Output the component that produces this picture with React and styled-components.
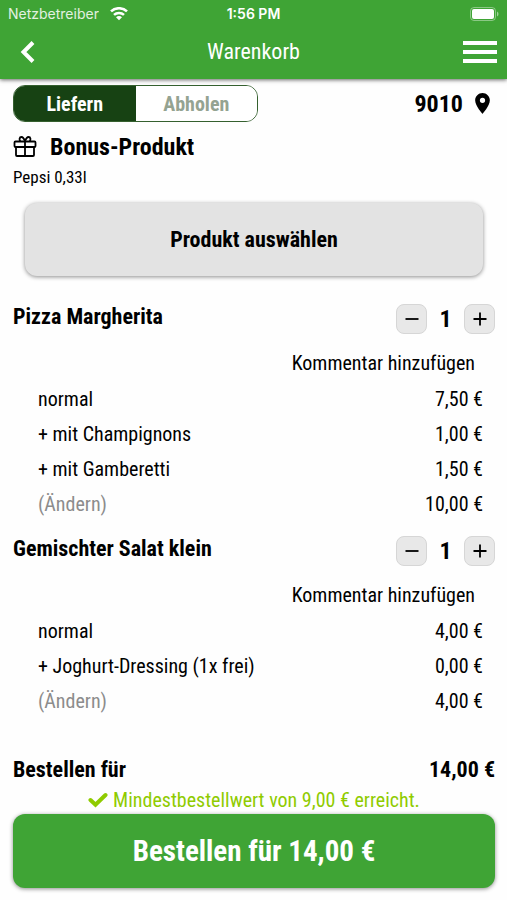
import React, { useState } from "react";
import styled, { createGlobalStyle } from "styled-components";

const GlobalStyle = createGlobalStyle`
  *, *::before, *::after { box-sizing: border-box; }
  body {
    margin: 0;
    background: #fefefe;
    color: #000;
    font-family: "Roboto Condensed", "Roboto", "Liberation Sans", sans-serif;
    font-size: 20px;
    line-height: 24px;
  }
  button {
    font: inherit;
    color: inherit;
    background: none;
    border: 0;
    padding: 0;
    cursor: pointer;
  }
`;

const Header = styled.header`
  background: #3fa435;
  color: #fff;
  box-shadow: 0 1px 4px rgba(0, 0, 0, 0.6);
  padding-bottom: 3px;
`;

const StatusBar = styled.div`
  display: grid;
  grid-template-columns: 1fr auto 1fr;
  align-items: center;
  height: 27px;
  padding: 0 8px;
  font-family: "Inter", sans-serif;
  font-size: 14px;
  line-height: 20px;
`;

const Carrier = styled.span`
  display: flex;
  align-items: center;
  gap: 11px;
`;

const CarrierName = styled.span`
  opacity: 0.85;
`;

const Clock = styled.span`
  font-weight: 600;
`;

const Battery = styled.span`
  display: flex;
  justify-content: flex-end;
`;

const NavBar = styled.nav`
  display: grid;
  grid-template-columns: 1fr auto 1fr;
  align-items: center;
  height: 49px;
  padding: 0 10px;
`;

const NavButton = styled.button`
  display: flex;
  justify-content: ${(p) => p.$align};
  justify-self: ${(p) => p.$align};
  min-width: 34px;
`;

const BackButton = styled(NavButton)`
  padding-left: 10px;
`;

const Title = styled.h1`
  margin: 0;
  font-size: 22px;
  font-weight: 400;
`;

const Main = styled.main`
  padding: 6px 12px 12px 13px;
`;

const SplitRow = styled.div`
  display: flex;
  align-items: center;
  justify-content: space-between;
`;

const Toggle = styled.div`
  display: flex;
  width: 245px;
  height: 37px;
  border: 1px solid #35602f;
  border-radius: 12px;
  overflow: hidden;
`;

const ToggleOption = styled.button`
  flex: 1;
  font-weight: 700;
  background: ${(p) => (p.$active ? "#174213" : "#fff")};
  color: ${(p) => (p.$active ? "#fff" : "#94a391")};
`;

const Location = styled.button`
  display: flex;
  align-items: center;
  gap: 12px;
  padding-right: 5px;
  font-size: 24px;
  font-weight: 700;
`;

const BonusHeading = styled.h2`
  display: flex;
  align-items: center;
  gap: 12px;
  margin: 10px 0 0;
  font-size: 24px;
  line-height: 30px;
  font-weight: 700;
`;

const BonusText = styled.p`
  margin: 3px 0 0;
  font-size: 17px;
`;

const ChooseButton = styled.button`
  display: block;
  width: calc(100% - 24px);
  height: 73px;
  margin: 14px 12px 28px;
  border-radius: 12px;
  background: #e3e3e3;
  box-shadow: 0 1px 4px rgba(0, 0, 0, 0.45);
  font-size: 22px;
  font-weight: 700;
`;

const Item = styled.section`
  display: flex;
  flex-direction: column;
  margin-bottom: 15px;
`;

const ItemHeader = styled.div`
  display: flex;
  align-items: flex-start;
  justify-content: space-between;
  margin-bottom: 11px;
`;

const ItemName = styled.h3`
  margin: 0;
  font-size: 22px;
  line-height: 26px;
  font-weight: 700;
`;

const Stepper = styled.div`
  display: flex;
  align-items: center;
`;

const StepButton = styled.button`
  display: flex;
  align-items: center;
  justify-content: center;
  width: 31px;
  height: 30px;
  border: 1px solid #d6d6d6;
  border-radius: 8px;
  background: #e8e8e8;
`;

const Quantity = styled.output`
  width: 37px;
  text-align: center;
  font-size: 24px;
  font-weight: 700;
`;

const CommentButton = styled.button`
  align-self: flex-end;
  height: 36px;
  margin-right: 20px;
`;

const Lines = styled.ul`
  margin: 0;
  padding: 0 12px 0 25px;
  list-style: none;
`;

const Line = styled.li`
  display: flex;
  align-items: center;
  justify-content: space-between;
  height: 35px;
`;

const EditButton = styled.button`
  color: #8c8c8c;
`;

const Total = styled(SplitRow)`
  margin-top: 40px;
  font-size: 22px;
  font-weight: 700;
`;

const MinimumNote = styled.p`
  display: flex;
  align-items: center;
  justify-content: center;
  gap: 5px;
  margin: 6px 0 2px;
  color: #8fcb00;
`;

const OrderButton = styled.button`
  display: block;
  width: 100%;
  height: 74px;
  border-radius: 12px;
  background: #3fa435;
  box-shadow: 0 1px 4px rgba(0, 0, 0, 0.45);
  color: #fff;
  font-size: 29px;
  font-weight: 700;
`;

const WifiIcon = () => (
  <svg width="18" height="14" viewBox="0 0 18 14" fill="none" stroke="#fff" strokeWidth="2.6" aria-hidden="true">
    <path d="M1 4.400C5.400.2 12.600.2 17 4.400" />
    <path d="M4 7.900C6.800 5.300 11.200 5.300 14 7.900" />
    <path d="M6 10.300C7.800 8.700 10.200 8.700 12 10.300L9 13.300Z" fill="#fff" stroke="none" />
  </svg>
);

const BatteryIcon = () => (
  <svg width="29" height="14" viewBox="0 0 29 14" aria-hidden="true">
    <rect x="0.5" y="0.5" width="25" height="13" rx="3.5" fill="none" stroke="#fff" strokeOpacity="0.4" />
    <rect x="2" y="2" width="22" height="10" rx="2" fill="#fff" />
    <path d="M27 4.500V9.500C29 8.500 29 5.500 27 4.500Z" fill="#fff" fillOpacity="0.5" />
  </svg>
);

const BackIcon = () => (
  <svg width="15" height="22" viewBox="0 0 15 22" fill="none" stroke="#fff" strokeWidth="4" aria-hidden="true">
    <path d="M13 1.500L3.500 11L13 20.500" />
  </svg>
);

const MenuIcon = () => (
  <svg width="34" height="24" viewBox="0 0 34 24" fill="#fff" aria-hidden="true">
    <path d="M0 1H34V5H0ZM0 10H34V14H0ZM0 19H34V23H0Z" />
  </svg>
);

const PinIcon = () => (
  <svg width="15" height="21" viewBox="5 2 14 20" aria-hidden="true">
    <path d="M12 2C8.130 2 5 5.130 5 9c0 5.250 7 13 7 13s7-7.750 7-13c0-3.870-3.130-7-7-7zm0 9.500a2.500 2.500 0 1 1 0-5 2.500 2.500 0 0 1 0 5z" />
  </svg>
);

const GiftIcon = () => (
  <svg width="25" height="22" viewBox="0 0 25 22" fill="none" stroke="#000" strokeWidth="1.8" aria-hidden="true">
    <rect x="1.5" y="5.500" width="21" height="5.500" rx="1" />
    <path d="M3 11V19Q3 20 4 20H20Q21 20 21 19V11M12 5.500V20" />
    <path d="M12 5.300C11 2.600 10 1 8.500 1C6.200 1 6 4.200 7.500 5.300M12 5.300C13 2.600 14 1 15.500 1C17.800 1 18 4.200 16.500 5.300" />
  </svg>
);

const StepIcon = ({ plus }) => (
  <svg width="14" height="14" viewBox="0 0 14 14" stroke="#000" strokeWidth="1.8" aria-hidden="true">
    <path d={plus ? "M0.500 7H13.500M7 0.500V13.500" : "M0.500 7H13.500"} />
  </svg>
);

const CheckIcon = () => (
  <svg width="20" height="16" viewBox="0 0 20 16" fill="none" stroke="currentColor" strokeWidth="4" strokeLinecap="round" aria-hidden="true">
    <path d="M2.500 8L7.500 12.800L17.500 3" />
  </svg>
);

const items = [
  {
    name: "Pizza Margherita",
    lines: [
      ["normal", "7,50 €"],
      ["+ mit Champignons", "1,00 €"],
      ["+ mit Gamberetti", "1,50 €"],
    ],
    sum: "10,00 €",
  },
  {
    name: "Gemischter Salat klein",
    lines: [
      ["normal", "4,00 €"],
      ["+ Joghurt-Dressing (1x frei)", "0,00 €"],
    ],
    sum: "4,00 €",
  },
];

function CartItem({ item }) {
  const [count, setCount] = useState(1);
  return (
    <Item>
      <ItemHeader>
        <ItemName>{item.name}</ItemName>
        <Stepper>
          <StepButton aria-label="Weniger" onClick={() => setCount(Math.max(0, count - 1))}>
            <StepIcon />
          </StepButton>
          <Quantity>{count}</Quantity>
          <StepButton aria-label="Mehr" onClick={() => setCount(count + 1)}>
            <StepIcon plus />
          </StepButton>
        </Stepper>
      </ItemHeader>
      <CommentButton>Kommentar hinzufügen</CommentButton>
      <Lines>
        {item.lines.map(([label, price]) => (
          <Line key={label}>
            <span>{label}</span>
            <span>{price}</span>
          </Line>
        ))}
        <Line>
          <EditButton>(Ändern)</EditButton>
          <span>{item.sum}</span>
        </Line>
      </Lines>
    </Item>
  );
}

export default function App() {
  const [mode, setMode] = useState("Liefern");
  return (
    <>
      <GlobalStyle />
      <Header>
        <StatusBar>
          <Carrier>
            <CarrierName>Netzbetreiber</CarrierName> <WifiIcon />
          </Carrier>
          <Clock>1:56 PM</Clock>
          <Battery>
            <BatteryIcon />
          </Battery>
        </StatusBar>
        <NavBar>
          <BackButton $align="start" aria-label="Zurück">
            <BackIcon />
          </BackButton>
          <Title>Warenkorb</Title>
          <NavButton $align="end" aria-label="Menü">
            <MenuIcon />
          </NavButton>
        </NavBar>
      </Header>
      <Main>
        <SplitRow>
          <Toggle role="group" aria-label="Bestellart">
            {["Liefern", "Abholen"].map((option) => (
              <ToggleOption
                key={option}
                $active={mode === option}
                aria-pressed={mode === option}
                onClick={() => setMode(option)}
              >
                {option}
              </ToggleOption>
            ))}
          </Toggle>
          <Location>
            9010 <PinIcon />
          </Location>
        </SplitRow>
        <BonusHeading>
          <GiftIcon /> Bonus-Produkt
        </BonusHeading>
        <BonusText>Pepsi 0,33l</BonusText>
        <ChooseButton>Produkt auswählen</ChooseButton>
        {items.map((item) => (
          <CartItem key={item.name} item={item} />
        ))}
        <Total>
          <span>Bestellen für</span>
          <span>14,00 €</span>
        </Total>
        <MinimumNote>
          <CheckIcon /> Mindestbestellwert von 9,00 € erreicht.
        </MinimumNote>
        <OrderButton>Bestellen für 14,00 €</OrderButton>
      </Main>
    </>
  );
}
